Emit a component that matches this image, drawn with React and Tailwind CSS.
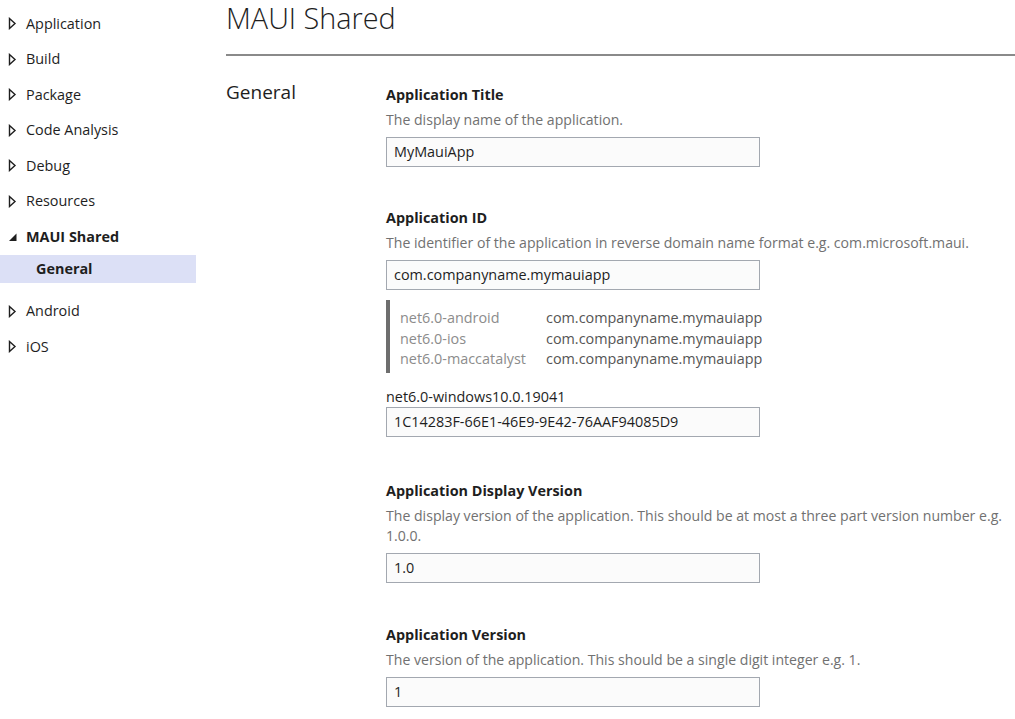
import React from 'react';

const navItems = [
  { label: 'Application' },
  { label: 'Build' },
  { label: 'Package' },
  { label: 'Code Analysis' },
  { label: 'Debug' },
  { label: 'Resources' },
  { label: 'MAUI Shared', open: true, children: ['General'] },
  { label: 'Android' },
  { label: 'iOS' },
];

const Collapsed = () => (
  <svg width="9" height="13" viewBox="0 0 9 13" className="shrink-0">
    <path d="M1.5 1.5 L7 6.5 L1.5 11.5 Z" fill="none" stroke="#1e1e1e" strokeWidth="1.4" />
  </svg>
);

const Expanded = () => (
  <svg width="9" height="13" viewBox="0 0 9 13" className="shrink-0">
    <path d="M8.5 3.5 L8.5 11 L1 11 Z" fill="#1e1e1e" />
  </svg>
);

const Sidebar = () => (
  <nav className="w-[196px] shrink-0 pt-[6px]">
    {navItems.map((item) => (
      <div key={item.label}>
        <div className="h-[35.5px] flex items-center gap-[9px] pl-[8px] text-[14.4px] text-[#1e1e1e]">
          {item.open ? <Expanded /> : <Collapsed />}
          <span className={item.open ? 'font-bold' : ''}>{item.label}</span>
        </div>
        {item.children && (
          <div className="pb-[11px]">
            {item.children.map((c) => (
              <div key={c} className="h-[28px] flex items-center pl-[36px] bg-[#dce0f6] font-bold text-[14.4px] text-[#1e1e1e]">
                {c}
              </div>
            ))}
          </div>
        )}
      </div>
    ))}
  </nav>
);

const TextBox = ({ value }) => (
  <div className="w-[374px] h-[30px] border border-[#a3a8b0] bg-[#fbfbfb] flex items-center px-[7px] text-[14.4px] text-[#1e1e1e]">
    {value}
  </div>
);

const Field = ({ title, desc, children, className = 'mb-[40px]' }) => (
  <div className={className}>
    <div className="font-bold text-[14.4px] leading-[22px] text-[#1e1e1e]">{title}</div>
    <div className="text-[14.1px] leading-[20px] text-[#717171] mt-[4px] mb-[7px]">{desc}</div>
    {children}
  </div>
);

const targets = [
  ['net6.0-android', 'com.companyname.mymauiapp'],
  ['net6.0-ios', 'com.companyname.mymauiapp'],
  ['net6.0-maccatalyst', 'com.companyname.mymauiapp'],
];

export default function App() {
  return (
    <div className="w-[1015px] h-[719px] overflow-hidden bg-white flex font-['Segoe_UI','Open_Sans',sans-serif]">
      <Sidebar />
      <main className="flex-1 pl-[30px]">
        <h1 className="text-[28.8px] font-light leading-[36px] text-[#1e1e1e] pb-[18px] border-b-2 border-[#8a8a8a]">
          MAUI Shared
        </h1>
        <div className="flex pt-[23px]">
          <div className="w-[160px] shrink-0 text-[19px] leading-[26px] text-[#1e1e1e]">General</div>
          <div className="flex-1 pt-[5px]">
            <Field title="Application Title" desc="The display name of the application.">
              <TextBox value="MyMauiApp" />
            </Field>
            <Field
              title="Application ID"
              desc="The identifier of the application in reverse domain name format e.g. com.microsoft.maui."
              className="mb-[43px]"
            >
              <TextBox value="com.companyname.mymauiapp" />
              <div className="mt-[10px] border-l-4 border-[#6e6e6e] pl-[10px] pt-[8px] pb-[3px] w-[374px]">
                {targets.map(([t, v]) => (
                  <div key={t} className="flex text-[14.4px] leading-[20.5px]">
                    <span className="w-[146px] shrink-0 text-[#8c8c8c]">{t}</span>
                    <span className="text-[#555555]">{v}</span>
                  </div>
                ))}
              </div>
              <div className="mt-[14px] text-[14.4px] leading-[20px] text-[#1e1e1e]">net6.0-windows10.0.19041</div>
              <TextBox value="1C14283F-66E1-46E9-9E42-76AAF94085D9" />
            </Field>
            <Field
              title="Application Display Version"
              desc="The display version of the application. This should be at most a three part version number e.g. 1.0.0."
              className="mb-[41px]"
            >
              <TextBox value="1.0" />
            </Field>
            <Field
              title="Application Version"
              desc="The version of the application. This should be a single digit integer e.g. 1."
            >
              <TextBox value="1" />
            </Field>
          </div>
        </div>
      </main>
    </div>
  );
}
